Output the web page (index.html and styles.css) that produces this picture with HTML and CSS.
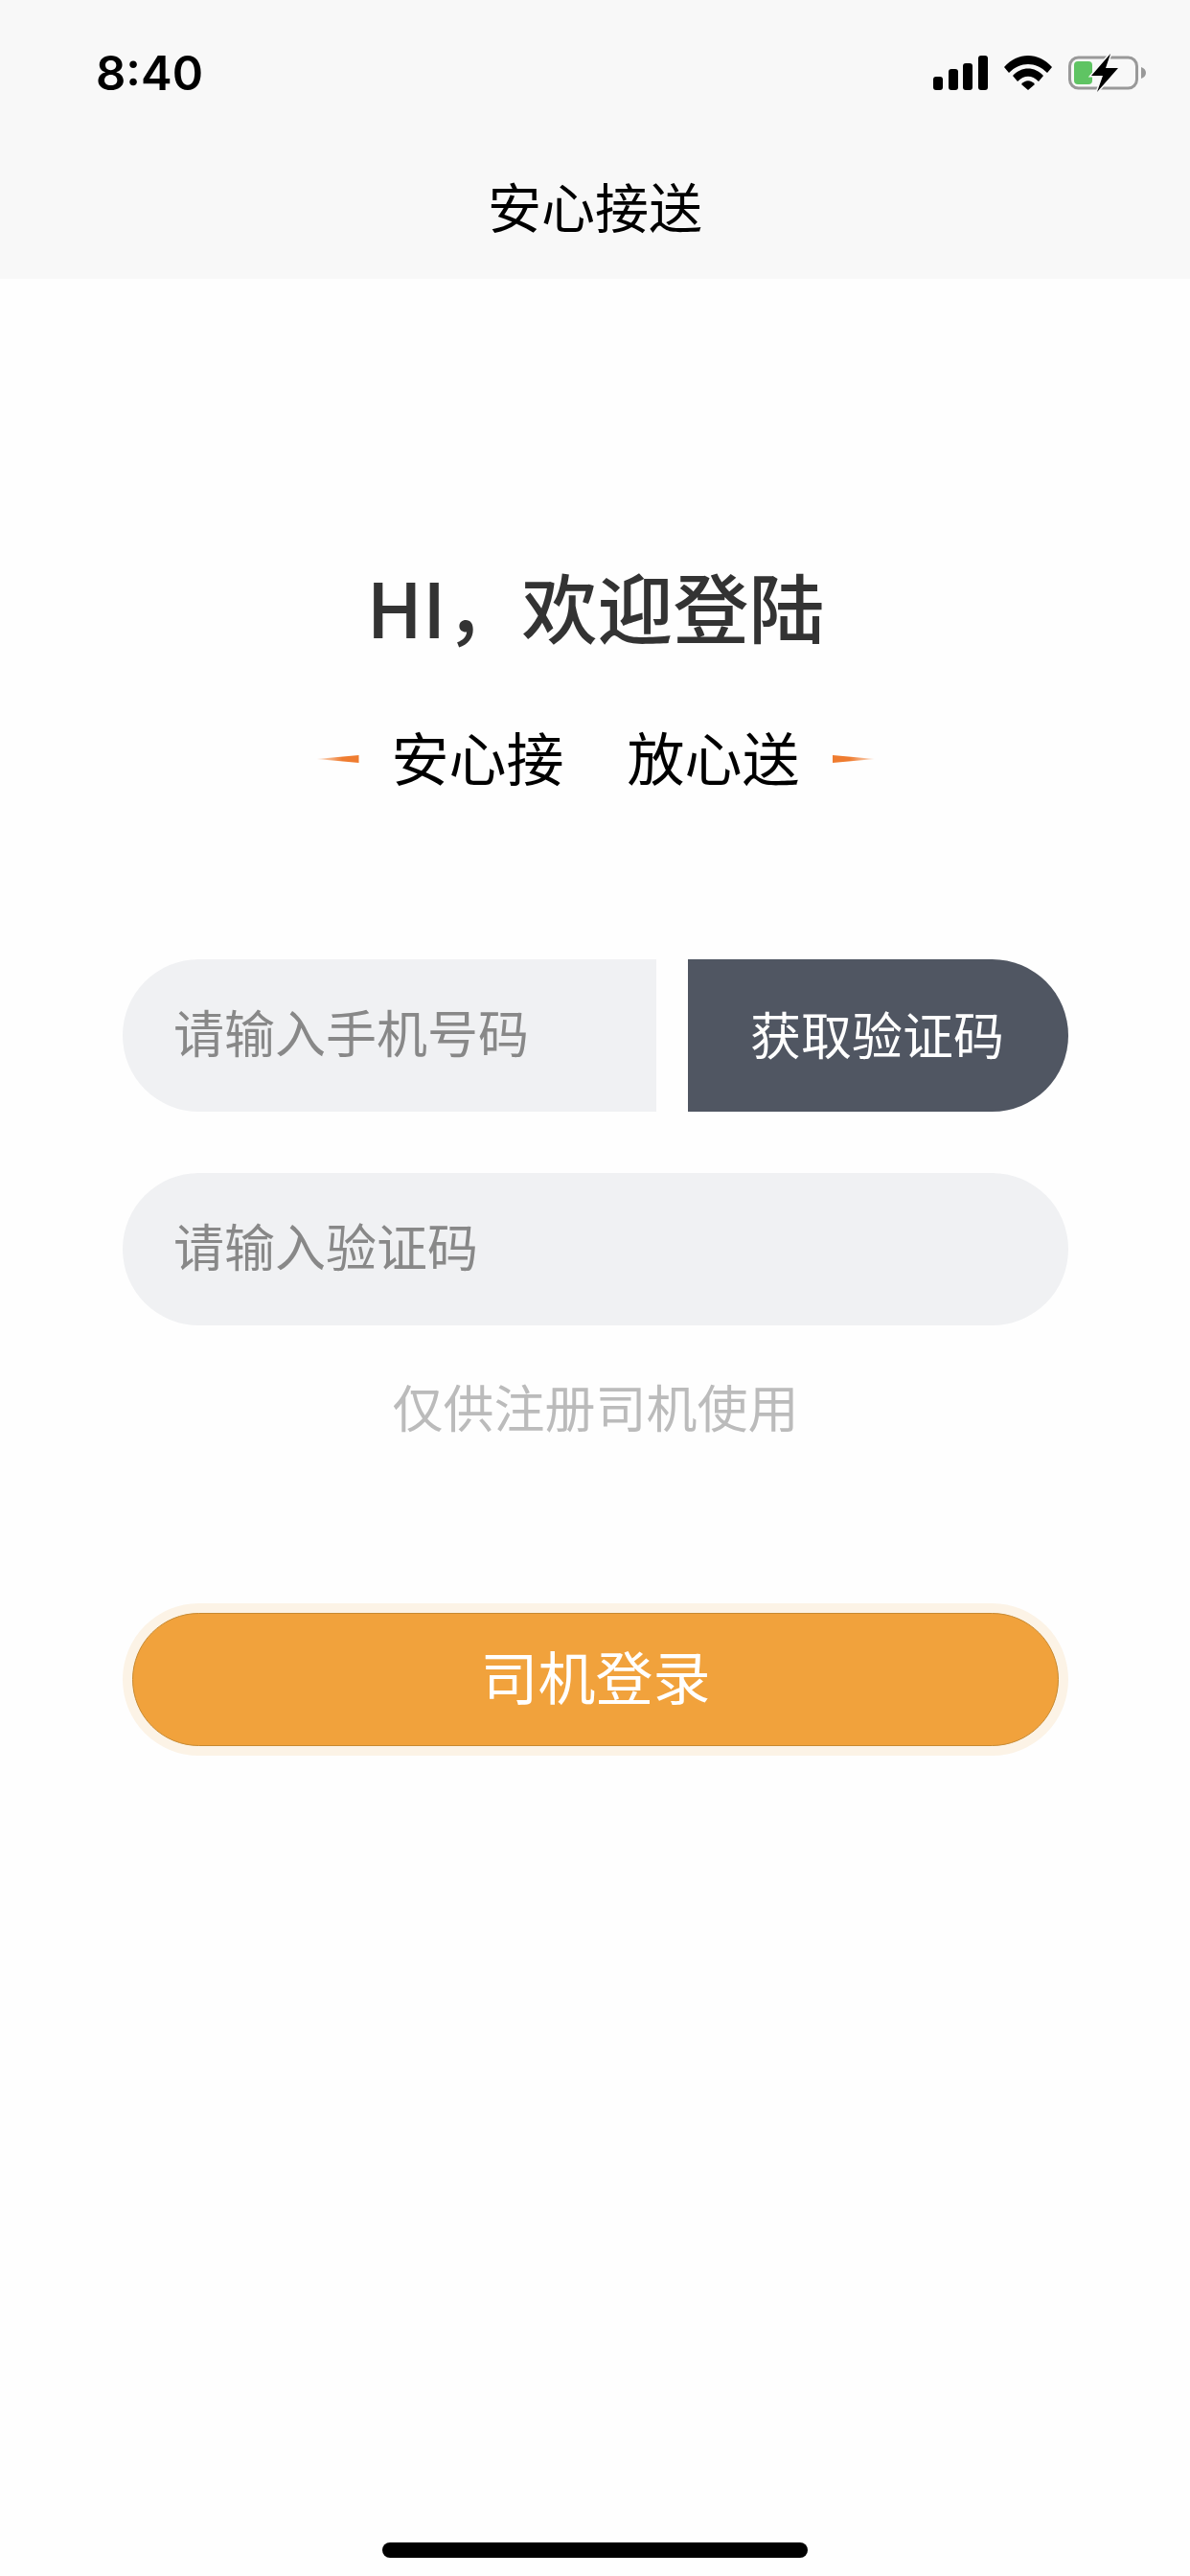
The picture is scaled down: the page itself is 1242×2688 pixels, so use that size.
FILE: index.html
```html
<!DOCTYPE html>
<html>
<head>
  <meta charset="UTF-8">
  <title>安心接送</title>
  <link rel="stylesheet" href="styles.css">
</head>
<body>
  <header class="bar">
    <div class="status">
      <span class="time">8:40</span>
      <div class="status_icons">
        <svg class="signal" width="57" height="36" viewBox="0 0 57 36">
          <rect x="0" y="22" width="10" height="14" rx="3"/>
          <rect x="16" y="14" width="10" height="22" rx="3"/>
          <rect x="31" y="8" width="10" height="28" rx="3"/>
          <rect x="47" y="0" width="10" height="36" rx="3"/>
        </svg>
        <svg class="wifi" width="50" height="36" viewBox="0 0 50 36">
          <path d="M0 12C14-4 36-4 50 12l-5 6C33 6 17 6 5 18z"/>
          <path d="M9 21C18 11 32 11 41 21l-5 6C29 20 21 20 14 27z"/>
          <path d="M18 30c4-5 10-5 14 0l-7 6z"/>
        </svg>
        <svg class="battery" width="82" height="40" viewBox="0 0 82 40">
          <rect x="1.5" y="4" width="70" height="32" rx="9" fill="none" stroke="#999" stroke-width="3"/>
          <path d="M76 14c3 1 5 3 5 6s-2 5-5 6z" fill="#999"/>
          <rect x="6" y="8" width="19" height="24" rx="4" fill="#5fc463"/>
          <path d="M44 0 24 23h12l-6 17 22-25H39z" stroke="#f8f8f8" stroke-width="3" paint-order="stroke"/>
        </svg>
      </div>
    </div>
    <h1 class="title">安心接送</h1>
  </header>

  <div class="content">
    <h2 class="welcome">HI，欢迎登陆</h2>
    <div class="slogan">
      <i class="dash"></i>
      <span>安心接</span>
      <span>放心送</span>
      <i class="dash dash_right"></i>
    </div>

    <form class="login">
      <div class="row">
        <div class="field field_phone">请输入手机号码</div>
        <div class="code_btn">获取验证码</div>
      </div>
      <div class="field field_code">请输入验证码</div>
      <p class="tip">仅供注册司机使用</p>
      <div class="btn_wrap">
        <div class="btn_login">司机登录</div>
      </div>
    </form>
  </div>

  <div class="home_bar"></div>
</body>
</html>
```

FILE: styles.css
```css
* {
  box-sizing: border-box;
}
html, body {
  margin: 0;
  height: 2688px;
}
body {
  display: flex;
  flex-direction: column;
  background-color: #fefefe;
  font-family: "Noto Sans CJK SC", "Noto Sans", sans-serif;
  overflow: hidden;
}
.bar {
  height: 291px;
  background-color: #f8f8f8;
}
.status {
  display: flex;
  justify-content: space-between;
  align-items: center;
  height: 152px;
  margin-bottom: 24px;
  padding: 0 45px 0 100px;
}
.time {
  font-family: Inter, "Liberation Sans", sans-serif;
  font-size: 49px;
  font-weight: 600;
  color: #000;
}
.status_icons {
  display: flex;
  align-items: center;
  gap: 17px;
}
.title {
  margin: 0;
  font-size: 56px;
  font-weight: 400;
  line-height: 76px;
  text-align: center;
  color: #000;
}
.content {
  flex: 1;
  padding: 293px 127px 0 128px;
}
.welcome {
  margin: 0;
  font-size: 79px;
  font-weight: 500;
  line-height: 96px;
  text-align: center;
  color: #333;
}
.slogan {
  display: flex;
  justify-content: center;
  align-items: center;
  gap: 66px;
  margin-top: 66px;
  font-size: 60px;
  line-height: 86px;
  color: #000;
}
.slogan .dash {
  width: 44px;
  height: 8px;
  margin: 6px -32px 0;
  background: linear-gradient(to right, rgba(240,125,50,0.2), #ef7c30 60%);
  clip-path: polygon(0 50%, 100% 0, 100% 100%);
}
.slogan .dash_right {
  transform: scaleX(-1);
}
.row {
  display: flex;
  gap: 33px;
  margin-top: 169px;
}
.field {
  height: 159px;
  padding-left: 53px;
  font-size: 53px;
  line-height: 150px;
  color: #888;
  background-color: #f0f1f3;
}
.field_phone {
  width: 557px;
  border-radius: 80px 0 0 80px;
}
.field_code {
  margin-top: 64px;
  border-radius: 80px;
}
.code_btn {
  flex: 1;
  height: 159px;
  padding-right: 2px;
  font-size: 53px;
  line-height: 155px;
  text-align: center;
  color: #fff;
  background-color: #505662;
  border-radius: 0 80px 80px 0;
}
.tip {
  margin: 46px 0 0;
  font-size: 53px;
  line-height: 76px;
  text-align: center;
  color: #bbb;
}
.btn_wrap {
  margin-top: 168px;
  padding: 10px;
  background-color: #fcf3e6;
  border-radius: 80px;
}
.btn_login {
  height: 139px;
  font-size: 60px;
  line-height: 128px;
  text-align: center;
  color: #fff;
  background-color: #f1a23c;
  border: 1px solid #c78a32;
  border-radius: 70px;
}
.home_bar {
  flex: none;
  width: 444px;
  height: 16px;
  margin: 0 auto 19px;
  background-color: #000;
  border-radius: 8px;
}
```
